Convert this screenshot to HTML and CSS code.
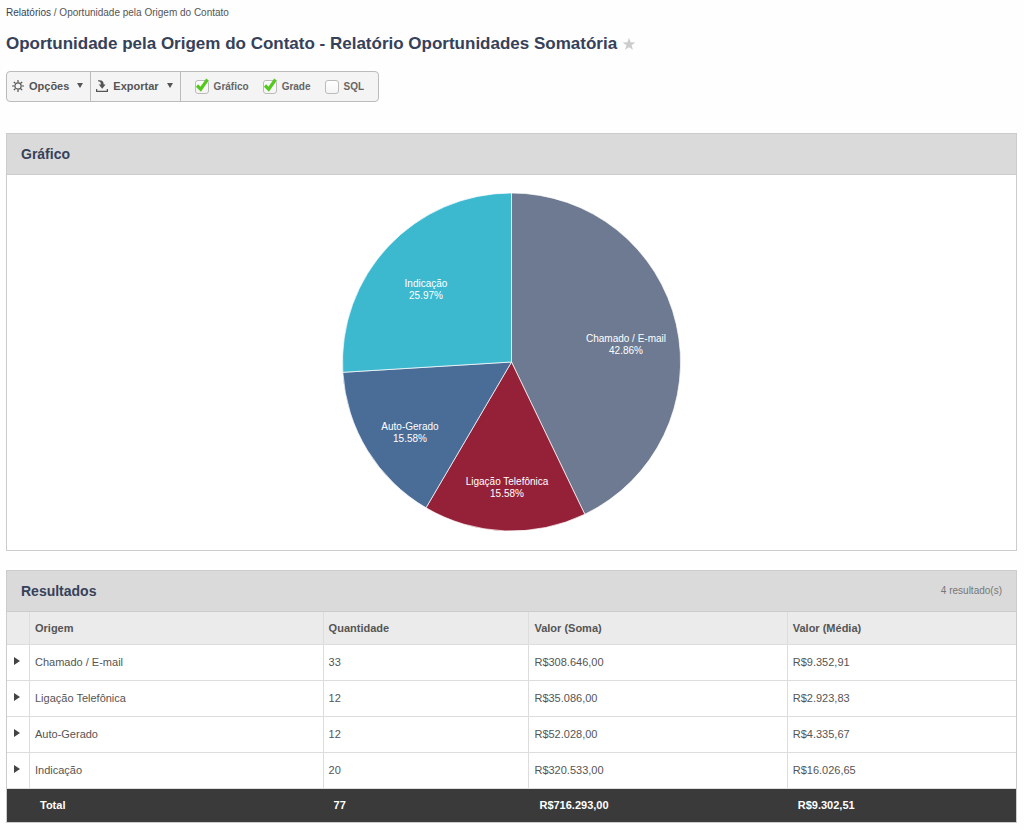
FILE: index.html
```html
<!DOCTYPE html>
<html lang="pt-BR">
<head>
<meta charset="utf-8">
<title>Oportunidade pela Origem do Contato</title>
<link rel="stylesheet" href="styles.css">
</head>
<body>
<nav class="breadcrumb"><a href="#">Relatórios</a> / Oportunidade pela Origem do Contato</nav>
<header class="page-header">
  <h1 class="page-title">Oportunidade pela Origem do Contato - Relatório Oportunidades Somatória</h1>
  <button class="favorite" type="button" aria-label="Favorito">
    <svg width="14" height="14" viewBox="0 0 14 14"><path fill="#ccc" d="M7 .8l1.6 4.4 4.7.2-3.7 2.9 1.3 4.5L7 10.200l-3.900 2.600 1.300-4.500L.7 5.400l4.700-.2z"/></svg>
  </button>
</header>

<div class="toolbar">
  <button class="tool" type="button">
    <svg class="tool-icon" width="12" height="12" viewBox="0 0 12 12" fill="none" stroke="#555" stroke-width="1.200"><circle cx="6" cy="6" r="3.100"/><path d="M6 0v2.500M6 9.500V12M0 6h2.500M9.500 6H12M1.800 1.800l1.700 1.700M8.500 8.500l1.700 1.700M10.200 1.800L8.500 3.500M3.500 8.500l-1.700 1.700"/></svg>
    Opções
    <svg class="caret" width="6" height="5" viewBox="0 0 6 5"><path fill="#555" d="M0 0h6L3 5z"/></svg>
  </button>
  <button class="tool" type="button">
    <svg class="tool-icon" width="12" height="12" viewBox="0 0 12 12"><path d="M.6 9v2.300h10.800V9" fill="none" stroke="#555" stroke-width="1.300"/><path fill="#555" d="M2 .3c3.800-.6 5.800 1 5.700 4.200h1.900L6.200 8.800 2.800 4.500h2C4.900 2.300 4.200 1.300 2 1.300z"/></svg>
    Exportar
    <svg class="caret" width="6" height="5" viewBox="0 0 6 5"><path fill="#555" d="M0 0h6L3 5z"/></svg>
  </button>
  <div class="toggles">
    <label class="toggle"><span class="check"><input class="check-box" type="checkbox" checked><svg class="check-mark" width="15" height="14" viewBox="0 0 15 14"><path d="M2 7.500l3.700 3.700L12.500 1.500" fill="none" stroke="#55c91e" stroke-width="3.200"/></svg></span>Gráfico</label>
    <label class="toggle"><span class="check"><input class="check-box" type="checkbox" checked><svg class="check-mark" width="15" height="14" viewBox="0 0 15 14"><path d="M2 7.500l3.700 3.700L12.500 1.500" fill="none" stroke="#55c91e" stroke-width="3.200"/></svg></span>Grade</label>
    <label class="toggle"><span class="check"><input class="check-box" type="checkbox"><svg class="check-mark" width="15" height="14" viewBox="0 0 15 14"><path d="M2 7.500l3.700 3.700L12.500 1.500" fill="none" stroke="#55c91e" stroke-width="3.200"/></svg></span>SQL</label>
  </div>
</div>

<section class="panel">
  <div class="panel-header"><h2 class="panel-title">Gráfico</h2></div>
  <div class="chart">
    <svg class="pie" width="341" height="340" viewBox="0 0 341 340" role="img" aria-label="Oportunidades por origem">
      <g stroke="#fff" stroke-opacity=".7">
        <path fill="#6d7a91" d="M170.500 170V1A169 169 0 0 1 243.800 322.300z"/>
        <path fill="#952139" d="M170.500 170L243.800 322.300A169 169 0 0 1 85 315.800z"/>
        <path fill="#4a6d98" d="M170.500 170L85 315.800A169 169 0 0 1 1.800 180.300z"/>
        <path fill="#3cb8cf" d="M170.500 170L1.800 180.300A169 169 0 0 1 170.500 1z"/>
      </g>
      <g class="pie-labels">
        <text x="285" y="150">Chamado / E-mail</text><text x="285" y="162">42.86%</text>
        <text x="166" y="293">Ligação Telefônica</text><text x="166" y="305">15.58%</text>
        <text x="69" y="238">Auto-Gerado</text><text x="69" y="250">15.58%</text>
        <text x="85" y="95">Indicação</text><text x="85" y="107">25.97%</text>
      </g>
    </svg>
  </div>
</section>

<section class="panel">
  <div class="panel-header"><h2 class="panel-title">Resultados</h2><span class="count">4 resultado(s)</span></div>
  <table class="grid">
    <colgroup><col class="col-expand"><col class="col-origin"><col class="col-quantity"><col class="col-sum"><col></colgroup>
    <thead><tr><th></th><th>Origem</th><th>Quantidade</th><th>Valor (Soma)</th><th>Valor (Média)</th></tr></thead>
    <tbody>
      <tr><td><button class="expand" type="button" aria-label="Expandir"><svg width="6" height="8" viewBox="0 0 6 8"><path fill="#444" d="M0 0l6 4-6 4z"/></svg></button></td><td>Chamado / E-mail</td><td>33</td><td>R$308.646,00</td><td>R$9.352,91</td></tr>
      <tr><td><button class="expand" type="button" aria-label="Expandir"><svg width="6" height="8" viewBox="0 0 6 8"><path fill="#444" d="M0 0l6 4-6 4z"/></svg></button></td><td>Ligação Telefônica</td><td>12</td><td>R$35.086,00</td><td>R$2.923,83</td></tr>
      <tr><td><button class="expand" type="button" aria-label="Expandir"><svg width="6" height="8" viewBox="0 0 6 8"><path fill="#444" d="M0 0l6 4-6 4z"/></svg></button></td><td>Auto-Gerado</td><td>12</td><td>R$52.028,00</td><td>R$4.335,67</td></tr>
      <tr><td><button class="expand" type="button" aria-label="Expandir"><svg width="6" height="8" viewBox="0 0 6 8"><path fill="#444" d="M0 0l6 4-6 4z"/></svg></button></td><td>Indicação</td><td>20</td><td>R$320.533,00</td><td>R$16.026,65</td></tr>
    </tbody>
    <tfoot><tr><td></td><td>Total</td><td>77</td><td>R$716.293,00</td><td>R$9.302,51</td></tr></tfoot>
  </table>
</section>
</body>
</html>
```
FILE: styles.css
```css
* { box-sizing: border-box; }

body {
  margin: 0;
  padding: 5px 7px 8px 6px;
  background: #fefefe;
  color: #555;
  font: 11px/16px "Liberation Sans", Arial, sans-serif;
}

button {
  margin: 0;
  padding: 0;
  border: 0;
  background: none;
  color: inherit;
  font: inherit;
  cursor: pointer;
}

.breadcrumb { font-size: 10px; }
.breadcrumb a { color: #36415a; text-decoration: none; }

.page-header {
  display: flex;
  align-items: center;
  gap: 5px;
  margin: 12px 0 16px;
}

.page-title {
  margin: 0;
  color: #36415a;
  font-size: 17px;
  line-height: 22px;
}

.favorite { display: flex; }

.toolbar {
  display: flex;
  width: fit-content;
  height: 31px;
  margin-bottom: 31px;
  border: 1px solid #bbb;
  border-radius: 4px;
  background: #f4f4f4;
  font-weight: bold;
}

.tool {
  display: flex;
  align-items: center;
  padding: 0 7px 2px 5px;
  border-right: 1px solid #bbb;
}

.tool-icon { margin-right: 5px; }
.caret { margin-left: 8px; }

.toggles {
  display: flex;
  align-items: center;
  gap: 14px;
  padding: 0 14px;
  color: #666;
  font-size: 10px;
}

.toggle { display: flex; align-items: center; gap: 5px; }

.check { position: relative; display: flex; }

.check-box {
  appearance: none;
  width: 14px;
  height: 14px;
  margin: 0;
  border: 1px solid #bbb;
  border-radius: 3px;
  background: linear-gradient(#fff, #f4f4f4);
}

.check-mark {
  position: absolute;
  top: -2px;
  left: 0;
  display: none;
  pointer-events: none;
}

.check-box:checked + .check-mark { display: block; }

.panel {
  margin-bottom: 19px;
  border: 1px solid #ccc;
  background: #fff;
}

.panel-header {
  display: flex;
  align-items: center;
  justify-content: space-between;
  height: 41px;
  padding: 0 14px;
  border-bottom: 1px solid #ccc;
  background: #dadada;
}

.panel-title {
  margin: 0;
  color: #36415a;
  font-size: 14px;
  line-height: 20px;
}

.count { color: #777; font-size: 10px; }

.chart {
  display: flex;
  justify-content: center;
  padding: 17px 0 18px;
}

.pie-labels {
  fill: #fff;
  font-size: 10px;
  text-anchor: middle;
}

.grid {
  width: 100%;
  table-layout: fixed;
  border-collapse: separate;
  border-spacing: 0;
}

.col-expand { width: 23px; }
.col-origin { width: 29.1%; }
.col-quantity { width: 20.4%; }
.col-sum { width: 25.6%; }

.grid th, .grid td {
  padding: 0 5px;
  border: solid #ddd;
  border-width: 0 1px 1px 0;
  text-align: left;
}

.grid th:last-child, .grid td:last-child { border-right: 0; }
.grid th { height: 33px; background: #ebebeb; }
.grid td { height: 36px; padding-bottom: 2px; }

.expand { display: flex; padding: 0 2px 2px; }

.grid tfoot td {
  height: 33px;
  padding: 0 10px;
  border-color: #3a3a3a;
  background: #3a3a3a;
  color: #fff;
  font-weight: bold;
}
```
